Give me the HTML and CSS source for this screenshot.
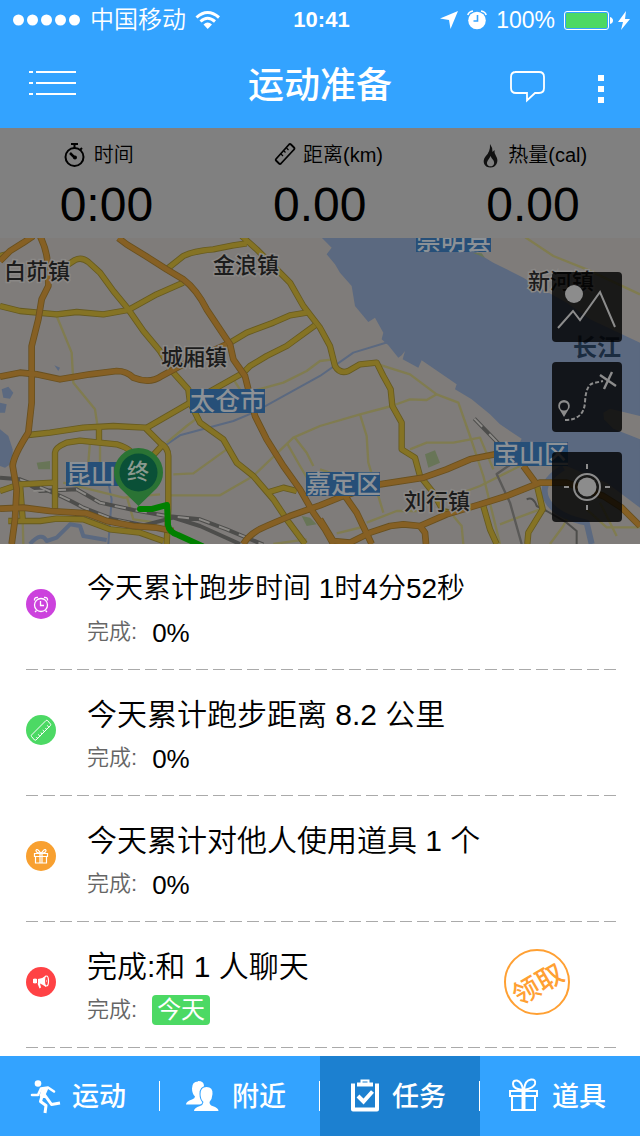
FILE: index.html
```html
<!DOCTYPE html>
<html lang="zh-CN">
<head>
    <meta charset="UTF-8">
    <meta name="viewport" content="width=device-width, initial-scale=1.0">
    <title>运动准备</title>
    <link rel="stylesheet" href="styles.css">
</head>
<body>

    <div class="status-bar">
        <div class="status-left">
            <svg width="68" height="12" viewBox="0 0 68 12" fill="#fff">
                <circle cx="5.500" cy="6" r="5.500"/><circle cx="19.500" cy="6" r="5.500"/><circle cx="33.500" cy="6" r="5.500"/><circle cx="47.500" cy="6" r="5.500"/><circle cx="61.500" cy="6" r="5.500"/>
            </svg>
            <span class="carrier">中国移动</span>
            <svg width="26" height="20" viewBox="0 0 26 20" fill="none" stroke="#fff" stroke-width="3">
                <path d="M1.500 7.500Q12.500-2.500 24 7.500M5.500 11.500q7-6.500 14.500 0"/>
                <path d="M8.500 14.500q4-4 8.500 0L12.700 19z" fill="#fff" stroke="none"/>
            </svg>
        </div>
        <time class="clock">10:41</time>
        <div class="status-right">
            <svg width="18" height="18" viewBox="0 0 18 18" fill="#fff"><path d="M18 0 10.500 18 9 9 0 7.500z"/></svg>
            <svg width="20" height="20" viewBox="0 0 20 20">
                <circle cx="10" cy="10.500" r="8.800" fill="#fff"/>
                <path d="M.8 5Q2 1.500 6 1M19.200 5Q18 1.500 14 1" fill="none" stroke="#fff" stroke-width="1.600"/>
                <path d="M10.500 5v6H6.500" fill="none" stroke="#33a3ff" stroke-width="1.600"/>
            </svg>
            <span class="battery-level">100%</span>
            <svg width="66" height="20" viewBox="0 0 66 20">
                <rect x=".5" y="1.500" width="44" height="18" rx="2.500" fill="none" stroke="#fff"/>
                <rect x="2" y="3" width="41" height="15" rx="1" fill="#4cd964"/>
                <path d="M46 7q3 1 3 3.500T46 14z" fill="#fff"/>
                <path d="M62 1 54 12h5l-2 8 9-11h-5z" fill="#fff"/>
            </svg>
        </div>
    </div>

    <header class="nav-bar">
        <button class="icon-btn" aria-label="菜单">
            <svg width="48" height="40" viewBox="0 0 48 40" fill="#fff">
                <path d="M0 7h4v2H0zM7 7h40v2H7zM0 18h4v2H0zM7 18h40v2H7zM0 29h4v2H0zM7 29h40v2H7z"/>
            </svg>
        </button>
        <h1>运动准备</h1>
        <div class="nav-actions">
            <button class="icon-btn" aria-label="消息">
                <svg width="36" height="40" viewBox="0 0 36 40" fill="none" stroke="#fff" stroke-width="1.800">
                    <path d="M6 8h24q5 0 5 5v11q0 5-5 5h-4l-8 7.500V29H7q-5 0-5-5V13q0-5 5-5z"/>
                </svg>
            </button>
            <button class="icon-btn" aria-label="更多">
                <svg width="20" height="40" viewBox="0 0 20 40" fill="#fff">
                    <path d="M7 11h6v6H7zM7 22h6v6H7zM7 33h6v6H7z"/>
                </svg>
            </button>
        </div>
    </header>

    <section class="stats">
        <div class="stat">
            <div class="stat-label">
                <svg width="28" height="26" viewBox="0 0 28 26" fill="none" stroke="#000" stroke-width="2">
                    <circle cx="14.500" cy="15" r="9"/>
                    <path d="M11 2h7M14.500 2v4M20 8l2-2"/>
                    <path d="M10 11l5 5" stroke-width="2.500"/><circle cx="15" cy="15.500" r="1"/>
                </svg>
                <span>时间</span>
            </div>
            <div class="stat-value">0:00</div>
        </div>
        <div class="stat">
            <div class="stat-label">
                <svg width="24" height="26" viewBox="0 0 24 26" fill="none" stroke="#000" stroke-width="1.800">
                    <path d="M3 17 16 2.500q1-1 2 0l3 3q1 1 0 2L8 21.500q-1 1-2 0l-3-3q-.7-.7 0-1.500z"/>
                    <path d="M8 12l2 2M11 9l1.500 1.500M13.500 6l2 2" stroke-width="1.200"/>
                </svg>
                <span>距离(km)</span>
            </div>
            <div class="stat-value">0.00</div>
        </div>
        <div class="stat">
            <div class="stat-label">
                <svg class="flame" width="16" height="26" viewBox="3 0 16 26">
                    <path fill="#111" fill-rule="evenodd" d="M7 2Q10 6 9.500 10L11.500 8Q11 11 13 14 15.500 18 13.500 22 11.500 25.500 7.500 25.500 3 25.500 1.200 22 -.3 18 2.500 14.500 7.500 9.500 7 2ZM7.500 14Q6.500 16.500 4.800 18.500 3 21.500 5 23.500 7.500 25.200 10 23.500 12 21.500 10.500 18.500 8.500 16.500 7.500 14Z"/>
                </svg>
                <span>热量(cal)</span>
            </div>
            <div class="stat-value">0.00</div>
        </div>
    </section>

    <section class="map">
        <svg class="map-canvas" viewBox="0 0 640 306" preserveAspectRatio="xMidYMid slice">
            <defs>
                <g id="highways">
                    <path d="M355 6 380 25 440 62 500 100 550 130Q590 160 620 220L660 280 690 325 700 370 735 420 750 480 765 540 800 610 850 690 900 760 940 830 975 880 1000 924"/>
                    <path d="M0 75 30 45 70 20 100 0M120 0Q145 50 145 110L145 150 125 190 115 250 95 330 95 410 95 500 85 590Q40 660 38 690L50 760 45 850 35 924"/>
                    <path d="M0 422 60 410 110 415 180 430 270 415 350 405Q380 405 400 425 450 445 485 420L550 385 680 325"/>
                    <path d="M0 818 70 815 150 825 260 832 320 855 400 870 470 875 520 885"/>
                    <path d="M730 924Q750 890 800 870L870 840 960 808 1030 780 1140 745 1270 725 1340 700 1410 670 1485 655"/>
                    <path d="M960 850 1000 915 1050 920 1110 890 1170 870 1210 865 1260 870 1340 835 1440 805 1520 780 1620 740 1700 740 1810 780 1865 815 1920 870"/>
                    <path d="M1035 780 1070 830 1115 924M1260 870 1275 890 1278 924M1570 690 1610 745"/>
                </g>
                <g id="roads">
                    <path d="M0 210 60 225 170 235 230 228 310 235 385 222 470 175 550 140M0 60 20 55"/>
                    <path d="M205 85 225 72Q245 62 265 78L300 110 340 165 385 220 430 285 480 345 520 410 565 460 570 500 600 560 670 610 710 680 760 720 820 790 860 850 915 924"/>
                    <path d="M500 100 550 60Q580 45 640 40L700 28 740 22M725 0 770 40 830 100 870 140 910 210 960 275 990 330 1005 390Q1020 415 1045 405L1080 385 1130 380 1150 420 1172 460 1177 510 1205 560 1205 640 1245 665 1260 720 1300 770 1330 825 1350 830"/>
                    <path d="M690 320 740 290 820 260 870 238 920 230M435 578 570 500 730 410 750 390 800 360 860 330 945 268"/>
                    <path d="M85 597 150 590 250 575 340 570 435 575 480 620Q505 635 505 660L505 820 500 924M297 575V620"/>
                    <path d="M165 820V650Q165 635 200 620L240 614 350 625Q400 640 400 665M485 630 430 690"/>
                    <path d="M0 765 60 745 160 740M60 745 68 850M25 855 120 855 170 848 250 850 330 880 420 890 490 915M800 770 850 755 890 765"/>
                    <path d="M1450 810 1470 880 1490 924M1610 745 1628 820 1585 890 1582 924"/>
                </g>
            </defs>
            <rect width="640" height="306" fill="#7f7c7a"/>
            <g transform="translate(0 -2) scale(.33333)" fill="none" stroke-linejoin="round">
                <!-- water -->
                <g fill="#5b6980">
                    <path d="M960 0 995 35 980 55 1005 85 1020 110 1055 150 1065 210 1105 258 1125 245 1150 290 1145 310 1165 328 1195 365 1205 358 1215 345 1208 370 1255 395 1265 373 1370 445 1365 460 1415 490 1470 535 1500 565 1565 608 1550 640 1700 690 1820 740 1920 815V320L1770 250 1700 200 1610 150 1570 125 1520 100 1480 80 1430 50 1390 0z"/>
                    <path d="M0 580 25 600 38 640 38 680 15 695 0 690z"/>
                    <path d="M5 460 25 452 40 470 30 488 10 485zM0 500 20 505 15 530 0 530z"/>
                    <path d="M163 388 180 395 175 405z"/>
                </g>
                <path fill="#7f7c7a" d="M1810 530 1830 518 1920 540V610L1840 578 1812 550z"/>
                <g stroke="#5b6980">
                    <path stroke-width="6" d="M500 625 540 598 700 555 760 530 960 420 1060 350 1165 318M325 740 335 790 325 924"/>
                    <path stroke-width="12" d="M90 924Q125 885 140 915L170 905 210 865 240 870 250 900 320 912"/>
                    <path stroke-width="18" d="M1690 695Q1615 740 1640 790T1760 860L1775 924"/>
                </g>
                <path fill="#687557" d="M1275 655 1305 643 1320 680 1285 695zM110 680 150 675 150 700 115 700zM905 840 930 845 950 865 920 870zM1418 50 1445 52 1455 65z"/>
                <!-- local streets -->
                <g stroke="#807c50" stroke-width="7">
                    <path d="M170 240 215 350 220 440 285 520 300 620 300 740M270 620 265 680M500 620 560 570 600 540M700 430 720 460M760 465 850 440 920 405 960 375 1000 370"/>
                    <path d="M520 715 580 712 680 640M500 778 660 778 760 720 880 605 960 570 1080 535 1175 510 1230 490 1280 492 1310 475M885 605 920 650 940 690M860 620 900 690 930 740"/>
                    <path d="M68 850 70 924M190 740 370 785 480 775M380 780 400 850 470 860M820 924 920 910"/>
                    <path d="M1135 385 1230 415 1310 475 1375 500 1410 600 1450 720 1500 924M1570 0 1660 60 1760 100 1920 175"/>
                    <path d="M1080 535 1100 600 1105 680 1150 830M1230 640 1280 620 1360 620 1440 605 1480 700M1360 780 1440 750 1520 710 1600 670M1100 860 1190 825 1250 825M960 700 1020 720M1360 840 1385 870 1390 924M1500 865 1620 820M1010 892 1100 870M1650 924 1690 870 1700 850M1760 820 1820 874H1920M1800 800 1850 900"/>
                </g>
                <!-- railway -->
                <path stroke="#4d4d4b" stroke-width="12" d="M0 725 60 730 120 765 230 760 300 800 400 822 500 840 600 850 680 880 790 926M60 730Q180 775 250 815L340 850 430 868 520 845 600 870 720 924M1423 548 1495 622"/>
                <path stroke="#5a5957" stroke-width="7" d="M1540 680 1490 714 1530 800 1565 924"/>
                <path stroke="#8b8986" stroke-width="6" stroke-dasharray="34 30" d="M100 765 230 760 300 800 400 822 500 840 600 850 680 880 790 926M60 730Q180 775 250 815L340 850 430 868M1423 548 1495 622"/>
                <path stroke="#4d4d4b" stroke-width="6" d="M1580 790Q1600 780 1610 810L1640 825 1700 860 1730 885V924"/>

                <use href="#roads" stroke="#665a20" stroke-width="19"/>
                <use href="#roads" stroke="#857324" stroke-width="14"/>
                <use href="#highways" stroke="#69501f" stroke-width="20"/>
                <use href="#highways" stroke="#866024" stroke-width="15"/>
            </g>

            <g class="town">
                <text x="4" y="41">白茆镇</text>
                <text x="213" y="35">金浪镇</text>
                <text x="161" y="127">城厢镇</text>
                <text x="528" y="51">新河镇</text>
                <text x="404" y="271">刘行镇</text>
                <text class="river" x="573" y="118">长江</text>
            </g>
            <g class="city">
                <rect x="416" y="0" width="75" height="14"/><text x="416" y="12">崇明县</text>
                <rect x="190" y="151" width="75" height="24"/><text x="190" y="172">太仓市</text>
                <rect x="66" y="224" width="75" height="24"/><text x="66" y="245">昆山</text>
                <rect x="306" y="234" width="74" height="24"/><text x="306" y="255">嘉定区</text>
                <rect x="494" y="204" width="74" height="24"/><text x="494" y="225">宝山区</text>
            </g>

            <path d="M140 271 152 271 167 267 168 287Q169 294 178 297L202 308" fill="none" stroke="#008000" stroke-width="6" stroke-linejoin="round" stroke-linecap="round"/>
            <path d="M138.500 268 120 250Q114 243 114 234.500A24.500 24.500 0 0 1 163 234.500Q163 243 157 250z" fill="#2a7334"/>
            <circle cx="138.500" cy="234.500" r="19" fill="#0a5037"/>
            <text class="pin-text" x="138" y="241">终</text>
        </svg>

        <div class="map-tools">
            <button class="tool-btn" aria-label="景色">
                <svg width="70" height="70" viewBox="0 0 70 70" fill="none" stroke="#8c8c8c" stroke-width="2">
                    <circle cx="22" cy="22" r="9" fill="#8c8c8c" stroke="none"/>
                    <path d="M6 56 21 39 28 48 48 20 63 55"/>
                </svg>
            </button>
            <button class="tool-btn" aria-label="路线">
                <svg width="70" height="70" viewBox="0 0 70 70" fill="none" stroke="#8c8c8c" stroke-width="2">
                    <path d="M12 55 7.500 47.500A5.800 5.800 0 1 1 16.500 47.500z" fill="#8c8c8c" stroke="none"/>
                    <circle cx="12" cy="44.500" r="4" fill="#121419" stroke="none"/>
                    <path d="M13 58Q32 58 33 40T42 21L51 19" stroke-dasharray="4 2"/>
                    <path d="M48 13 64 24M60 10 52 27" stroke-width="2.400"/>
                </svg>
            </button>
            <button class="tool-btn" aria-label="定位">
                <svg width="70" height="70" viewBox="0 0 70 70" fill="none" stroke="#8c8c8c" stroke-width="2">
                    <circle cx="35" cy="35" r="13"/>
                    <circle cx="35" cy="35" r="9.500" fill="#8c8c8c" stroke="none"/>
                    <path d="M35 12v5M35 53v5M12 35h5M53 35h5"/>
                </svg>
            </button>
        </div>
    </section>

    <main class="task-list">
        <article class="task">
            <svg class="task-icon" viewBox="0 0 30 30" fill="none" stroke="#fff" stroke-width="1.300">
                <circle cx="15" cy="15" r="15" fill="#cc42dd" stroke="none"/>
                <circle cx="15" cy="16" r="6.500"/>
                <path d="M14.500 12v4.500H18M8.500 11.500Q8 8 12 8.500M21.500 11.500Q22 8 18 8.500M10.500 21.500 9 23M19.500 21.500 21 23"/>
            </svg>
            <div class="task-body">
                <h2 class="compact">今天累计跑步时间 1时4分52秒</h2>
                <p><span class="task-state">完成:</span><span class="task-progress">0%</span></p>
            </div>
        </article>
        <article class="task">
            <svg class="task-icon" viewBox="0 0 30 30" fill="none" stroke="#fff">
                <circle cx="15" cy="15" r="15" fill="#4cd964" stroke="none"/>
                <path d="M5.500 20 20 5.500q1-.5 1.500 0l3 3.500q.5.500 0 1.500L10 25q-1 .5-1.500 0L5.500 21.500q-.5-1 0-1.500z"/>
                <path d="M11.500 23.500l-1-1.500M13.800 21.300l-1.500-2M16 19l-1-1.500M18.300 16.800l-1.500-2M20.500 14.500l-1-1.500M22.800 12.300l-1.500-2"/>
            </svg>
            <div class="task-body">
                <h2>今天累计跑步距离 8.2 公里</h2>
                <p><span class="task-state">完成:</span><span class="task-progress">0%</span></p>
            </div>
        </article>
        <article class="task">
            <svg class="task-icon" viewBox="0 0 30 30" fill="none" stroke="#fff" stroke-width="1.200">
                <circle cx="15" cy="15" r="15" fill="#f8a030" stroke="none"/>
                <path d="M8.500 12.500h13v3h-13zM9.500 15.500V22h11v-6.500M14 12.500V22M16 12.500V22M15 12.500Q10 12 10 9.500 11 6.500 15 12.500 19 6.500 20 9.500 20 12 15 12.500z"/>
            </svg>
            <div class="task-body">
                <h2>今天累计对他人使用道具 1 个</h2>
                <p><span class="task-state">完成:</span><span class="task-progress">0%</span></p>
            </div>
        </article>
        <article class="task">
            <svg class="task-icon" viewBox="0 0 30 30">
                <circle cx="15" cy="15" r="15" fill="#ff4245"/>
                <path d="M7 12q2-.8 4 0v4q-2 .8-4 0zM12 12q4 0 8-3.500v11.500Q16 17 14 16.500l1 4-1.500 1-2-5h.5z" fill="#fff"/>
                <ellipse cx="20.500" cy="14" rx="2" ry="5" fill="#ff4245" stroke="#fff" stroke-width="1.200"/>
                <path d="M20 12.500q1.500 1.500 0 3z" fill="#fff"/>
            </svg>
            <div class="task-body">
                <h2>完成:和 1 人聊天</h2>
                <p><span class="task-state">完成:</span><span class="task-badge">今天</span></p>
            </div>
            <button class="claim-btn"><span>领取</span></button>
        </article>
    </main>

    <nav class="tab-bar">
        <a href="#sport">
            <svg width="32" height="36" viewBox="0 0 32 36">
                <circle cx="8" cy="5.500" r="3.300" fill="#fff"/>
                <path d="M2 17 8 17 11 10.500 18 9.500 24 13.500" fill="none" stroke="#fff" stroke-width="2.600" stroke-linejoin="round" stroke-linecap="round"/>
                <path d="M12 9.500 19 9 15.500 17 17 20 12 20 9.500 18z" fill="#fff"/>
                <path d="M14 16 21.500 26.500 30 25M12 18 10.500 23.500 16 27.500 15 35" fill="none" stroke="#fff" stroke-width="3" stroke-linejoin="round"/>
            </svg>
            <span>运动</span>
        </a>
        <a href="#nearby">
            <svg width="32" height="36" viewBox="5 0 32 36" fill="#fff">
                <path d="M13 3q6 0 6 5 0 7-3 9.500 0 2.500 2 4v5H1q0-3 6-5 3-1 3-3-3-3-3-8 0-7 6-7z"/>
                <path class="person-front" d="M21.500 9q6.500 0 6 7-.3 5-3 8 0 3 3 4 6 2 6 5H9q0-3 6-5 3-1 3.500-4-3-3-3-8 0-7 6-7z"/>
            </svg>
            <span>附近</span>
        </a>
        <a href="#tasks" class="active">
            <svg width="32" height="36" viewBox="1 0 32 36" fill="none" stroke="#fff">
                <path d="M4 5.500V31.500H28V5.500" stroke-width="4" stroke-linejoin="round"/>
                <path d="M8 6.500h16" stroke-width="4"/><path d="M12.500 5.500V2.500h7v3" stroke-width="2"/>
                <path d="M9 18l5.500 5.500 9-10" stroke-width="4"/>
            </svg>
            <span>任务</span>
        </a>
        <a href="#props">
            <svg width="32" height="36" viewBox="2 0 32 36" fill="none" stroke="#fff" stroke-width="2">
                <path d="M2 13h27v5H2zM4 18v14h23V18"/><path d="M15.500 13v19" stroke-width="4"/>
                <path d="M15 12Q5 11 5 6 5 2 9 2.500 14 4 15 12zM16 12Q17 2 23 1.500 28 1 27 6 26 10 16 12z"/>
            </svg>
            <span>道具</span>
        </a>
    </nav>

</body>
</html>
```
FILE: styles.css
```css
* {
    box-sizing: border-box;
}

body {
    font-family: "Liberation Sans", "Noto Sans CJK SC", sans-serif;
    margin: 0;
    min-height: 100vh;
    display: flex;
    flex-direction: column;
    background-color: #fff;
    color: #000;
}

svg {
    display: block;
    flex-shrink: 0;
}

h1, h2, p {
    margin: 0;
}

button {
    padding: 0;
    border: none;
    background: none;
    font-family: inherit;
    cursor: pointer;
}

.status-bar {
    display: grid;
    grid-template-columns: 1fr auto 1fr;
    align-items: center;
    height: 40px;
    padding: 0 10px 0 13px;
    background-color: #33a3ff;
    color: #fff;
    font-size: 24px;
    line-height: 30px;
}

.status-left,
.status-right {
    display: flex;
    align-items: center;
    gap: 9px;
}

.status-right {
    justify-content: flex-end;
}

.carrier {
    font-weight: 350;
}

.clock {
    font-size: 22px;
    font-weight: bold;
}

.battery-level {
    font-size: 23px;
}

.nav-bar {
    display: grid;
    grid-template-columns: 1fr auto 1fr;
    align-items: center;
    height: 88px;
    padding: 0 29px;
    background-color: #33a3ff;
    color: #fff;
}

.nav-bar h1 {
    padding-top: 3px;
    font-size: 36px;
    font-weight: 500;
    line-height: 44px;
}

.icon-btn {
    justify-self: start;
}

.nav-actions {
    display: flex;
    justify-content: flex-end;
    gap: 46px;
}

.stats {
    display: grid;
    grid-template-columns: repeat(3, 1fr);
    justify-items: center;
    padding: 14px 0 8px;
    background-color: #808080;
}

.stat {
    width: 94px;
}

.stat-label {
    display: flex;
    align-items: center;
    gap: 6px;
    margin-bottom: 12px;
    font-size: 20px;
    font-weight: 350;
    line-height: 26px;
    white-space: nowrap;
}

.stat-value {
    font-size: 48px;
    line-height: 50px;
}

.flame {
    overflow: visible;
}

.map {
    position: relative;
    height: 306px;
    overflow: hidden;
}

.map-canvas {
    width: 100%;
    height: 100%;
}

.town {
    font-size: 22px;
    font-weight: 500;
    fill: #1c1c1c;
    stroke: #8a8886;
    stroke-width: 3px;
    paint-order: stroke;
}

.town .river {
    font-size: 24px;
    font-weight: bold;
    fill: #1b2c40;
    stroke: #5b6980;
}

.city rect {
    fill: #264f78;
}

.city text {
    font-size: 25px;
    font-weight: 500;
    fill: #8c9196;
}

.pin-text {
    font-size: 22px;
    font-weight: 500;
    fill: #8a9a8f;
    text-anchor: middle;
}

.map-tools {
    position: absolute;
    top: 34px;
    right: 18px;
    display: flex;
    flex-direction: column;
    gap: 20px;
}

.tool-btn {
    border-radius: 4px;
    background-color: rgba(0, 0, 0, 0.8);
}

.task-list {
    flex: 1;
    padding-bottom: 8px;
}

.task {
    display: flex;
    align-items: center;
    margin: 0 24px 0 26px;
    padding: 17px 0 23px;
    background: repeating-linear-gradient(to right, #aaa 0 12px, transparent 12px 17px) left bottom / 100% 1px no-repeat;
}

.task-icon {
    width: 30px;
    height: 30px;
    margin-right: 31px;
}

.task-body {
    flex: 1;
}

.task h2 {
    font-size: 30px;
    font-weight: 350;
    line-height: 56px;
}

.task h2.compact {
    font-size: 28px;
}

.task p {
    display: flex;
    align-items: center;
    gap: 15px;
    line-height: 30px;
}

.task-state {
    font-size: 22px;
    font-weight: 350;
    color: #666;
}

.task-progress {
    padding-top: 2px;
    line-height: 28px;
    font-size: 26px;
}

.task-badge {
    padding: 0 5px;
    border-radius: 4px;
    background-color: #4cd964;
    color: #fff;
    font-size: 24px;
}

.claim-btn {
    width: 66px;
    height: 66px;
    margin-right: 46px;
    border: 2px solid #ffa033;
    border-radius: 50%;
    color: #ffa033;
    font-size: 27px;
    font-weight: 500;
}

.claim-btn span {
    display: block;
    transform: rotate(-30deg);
}

.tab-bar {
    display: grid;
    grid-template-columns: repeat(4, 1fr);
    height: 80px;
    background-color: #33a3ff;
}

.tab-bar a {
    display: flex;
    align-items: center;
    justify-content: center;
    gap: 10px;
    padding-right: 4px;
    background: linear-gradient(#fff, #fff) right center / 1px 30px no-repeat;
    color: #fff;
    font-size: 27px;
    font-weight: 500;
    line-height: 36px;
    text-decoration: none;
}

.tab-bar svg {
    overflow: visible;
}

.tab-bar span {
    padding-top: 2px;
}

.tab-bar a.active {
    background-color: #1c80d0;
}

.tab-bar a:last-child {
    background-image: none;
}

.person-front {
    stroke: #33a3ff;
    stroke-width: 2px;
    paint-order: stroke;
}
```
